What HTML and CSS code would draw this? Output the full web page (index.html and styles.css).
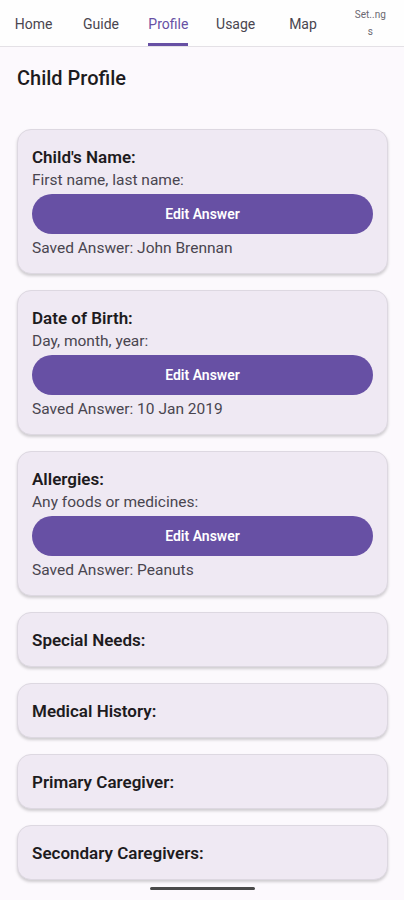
FILE: index.html
```html
<!DOCTYPE html>
<html lang="en">
<head>
    <meta charset="UTF-8">
    <meta name="viewport" content="width=device-width, initial-scale=1.0">
    <title>Child Profile</title>
    <link rel="stylesheet" href="styles.css">
</head>
<body>

<!-- Top tabs -->
<nav class="tabs">
    <div class="tab">Home</div>
    <div class="tab">Guide</div>
    <div class="tab active"><span>Profile</span></div>
    <div class="tab">Usage</div>
    <div class="tab">Map</div>
    <div class="tab small">Set..ng<br>s</div>
</nav>

<main class="page">
    <h1 class="page-title">Child Profile</h1>

    <!-- Answered questions -->
    <section class="card">
        <h2 class="card-title">Child's Name:</h2>
        <p class="hint">First name, last name:</p>
        <button type="button" class="edit-btn">Edit Answer</button>
        <p class="saved">Saved Answer: John Brennan</p>
    </section>

    <section class="card">
        <h2 class="card-title">Date of Birth:</h2>
        <p class="hint">Day, month, year:</p>
        <button type="button" class="edit-btn">Edit Answer</button>
        <p class="saved">Saved Answer: 10 Jan 2019</p>
    </section>

    <section class="card">
        <h2 class="card-title">Allergies:</h2>
        <p class="hint">Any foods or medicines:</p>
        <button type="button" class="edit-btn">Edit Answer</button>
        <p class="saved">Saved Answer: Peanuts</p>
    </section>

    <!-- Collapsed questions -->
    <section class="card"><h2 class="card-title">Special Needs:</h2></section>
    <section class="card"><h2 class="card-title">Medical History:</h2></section>
    <section class="card"><h2 class="card-title">Primary Caregiver:</h2></section>
    <section class="card"><h2 class="card-title">Secondary Caregivers:</h2></section>
</main>

<div class="gesture-bar"></div>

</body>
</html>
```

FILE: styles.css
```css
body {
    margin: 0;
    font-family: Roboto, 'Noto Sans', sans-serif;
    background-color: #fcf9fd;
    color: #1d1b20;
}

.tabs {
    display: grid;
    grid-template-columns: repeat(6, 1fr);
    height: 46px;
    border-bottom: 1px solid #e4e1e6;
    background-color: #fefefe;
}

.tab {
    display: flex;
    justify-content: center;
    align-items: center;
    font-size: 14px;
    color: #49454f;
    padding-top: 2px;
}

.tab.active {
    color: #6750a4;
    align-items: stretch;
}

.tab.active span {
    display: flex;
    align-items: center;
    padding-top: 3px;
    border-bottom: 3px solid #6750a4;
    border-radius: 2px 2px 0 0;
}

.tab.small {
    font-size: 10px;
    line-height: 17px;
    text-align: center;
    color: #6b6870;
    padding-top: 0;
}

.page {
    padding: 0 16px 40px 17px;
}

.page-title {
    margin: 0;
    padding-top: 18px;
    font-size: 20px;
    font-weight: 500;
    line-height: 26px;
    margin-bottom: 38px;
}

.card {
    background-color: #efe9f3;
    border: 1px solid #ddd8e1;
    border-radius: 14px;
    box-shadow: 0 2px 3px rgba(0, 0, 0, 0.18);
    padding: 16px 14px 15px;
    margin-bottom: 16px;
}

.card-title {
    margin: 0;
    font-size: 17px;
    font-weight: 600;
    line-height: 22px;
    color: #1d1b20;
}

.hint, .saved {
    margin: 0;
    font-size: 15.5px;
    line-height: 20px;
    color: #49454f;
}

.hint {
    margin-top: 2px;
}

.edit-btn {
    display: block;
    width: 100%;
    height: 40px;
    margin: 4px 0;
    border: none;
    border-radius: 20px;
    background-color: #6750a4;
    color: #ffffff;
    font-family: Roboto, sans-serif;
    font-size: 14px;
    font-weight: 600;
}

.gesture-bar {
    position: fixed;
    left: 150px;
    top: 887px;
    width: 105px;
    height: 3px;
    border-radius: 2px;
    background-color: #4a4a4a;
}
```
